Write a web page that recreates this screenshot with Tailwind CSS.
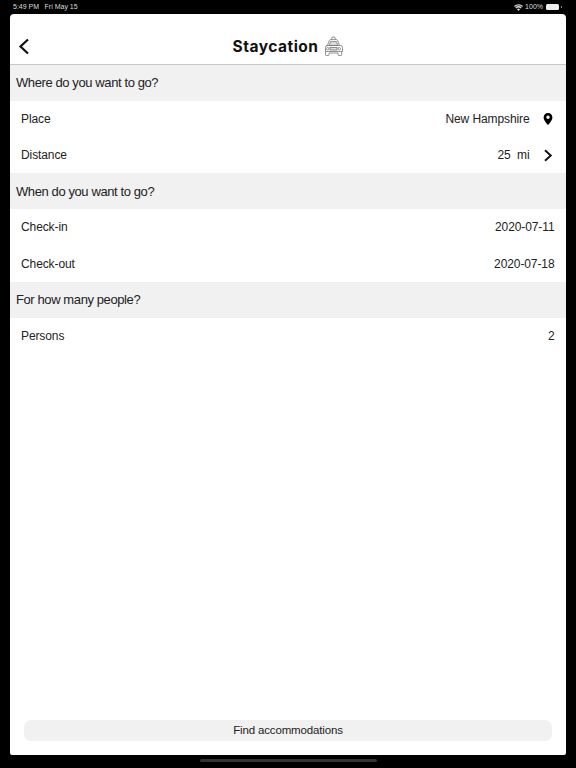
<!DOCTYPE html>
<html lang="en">
<head>
    <meta charset="UTF-8">
    <meta name="viewport" content="width=device-width, initial-scale=1.0">
    <title>Staycation</title>
    <script src="https://cdn.jsdelivr.net/npm/@tailwindcss/browser@4"></script>
</head>
<body class="bg-black font-['Liberation_Sans',sans-serif] text-[12px] tracking-[-0.1px] text-[#222]">
    <div class="relative h-[768px] w-[576px] overflow-hidden bg-black">
        <!-- status bar -->
        <div class="flex h-[13px] items-center justify-between pt-[1px] pl-[13px] pr-[14px] text-[7px] tracking-normal text-[#ddd]">
            <div class="flex gap-[5.5px]"><span>5:49 PM</span><span>Fri May 15</span></div>
            <div class="flex items-center gap-[2px]">
                <svg width="9" height="7" viewBox="0 0 18 14" fill="#ddd"><path d="M9 14 6 10.6a4.4 4.4 0 0 1 6 0zM4.4 8.9 2.7 7a9.3 9.3 0 0 1 12.6 0l-1.7 1.9a6.8 6.8 0 0 0-9.2 0zM1.6 5.8 0 4a13.3 13.3 0 0 1 18 0l-1.6 1.8a11 11 0 0 0-14.8 0z"/></svg>
                <span>100%</span>
                <div class="ml-[1px] h-[6px] w-[13px] rounded-[1.5px] bg-[#eee]"></div>
                <div class="h-[2px] w-[1px] bg-[#888]"></div>
            </div>
        </div>

        <!-- card -->
        <div class="mx-[10px] mt-[1px] flex h-[741px] w-[556px] flex-col rounded-t-[4px] rounded-b-[2px] bg-white">
            <div class="relative flex h-[51px] shrink-0 items-center justify-center border-b border-[#c8c8c8] pt-[15px]">
                <svg class="absolute left-[8px] top-[24px]" width="12" height="17" viewBox="0 0 12 17" fill="none" stroke="#111" stroke-width="2.2"><path d="M10 1.5 2.5 8.5l7.5 7"/></svg>
                <span class="font-['Inter',sans-serif] text-[15.5px] font-bold tracking-[0.5px] text-[#111]">Staycation</span>
                <svg class="ml-[4px]" width="21" height="21" viewBox="0 0 21 21" fill="none" stroke="#777" stroke-width="0.8">
                    <path d="M8.5 3.5 9.3 1h2.4l.8 2.5"/>
                    <path d="M4.5 9.5 6.3 4.6a1.4 1.4 0 0 1 1.3-1h5.8a1.4 1.4 0 0 1 1.3 1l1.8 4.9"/>
                    <path d="M6.3 9.5 7.6 5.6h5.8l1.3 3.9z" fill="#ddd"/>
                    <path d="M3.5 9.5h14a2 2 0 0 1 2 2v4h-17v-4a2 2 0 0 1 2-2z"/>
                    <rect x="7" y="11.5" width="7" height="2.5" fill="#ddd"/>
                    <circle cx="4.7" cy="12.7" r="1.2"/><circle cx="16.3" cy="12.7" r="1.2"/>
                    <path d="M2.5 15.5v3.2a.8.8 0 0 0 .8.8h2a.8.8 0 0 0 .8-.8v-1.7h9v1.7a.8.8 0 0 0 .8.8h2a.8.8 0 0 0 .8-.8v-3.2"/>
                </svg>
            </div>

            <div class="flex h-[36px] shrink-0 items-center bg-[#f1f1f1] pl-[6px] text-[13px] tracking-[-0.4px]">Where do you want to go?</div>
            <div class="flex h-[36.2px] items-center justify-between pl-[11px] pr-[11.5px]">
                <span>Place</span>
                <div class="flex items-center"><span>New Hampshire</span>
                    <svg class="mr-[2px] ml-[13px]" width="10" height="12" viewBox="0 0 10 12" fill="#000"><path fill-rule="evenodd" d="M5 0a4.4 4.4 0 0 0-4.4 4.4C.6 7.3 5 12 5 12s4.4-4.7 4.4-7.6A4.4 4.4 0 0 0 5 0zm0 6a1.7 1.7 0 1 1 0-3.4A1.7 1.7 0 0 1 5 6z"/></svg>
                </div>
            </div>
            <div class="flex h-[36.2px] items-center justify-between pl-[11px] pr-[11.5px]">
                <span>Distance</span>
                <div class="flex items-center"><span class="whitespace-pre">25  mi</span>
                    <svg class="mr-[2px] ml-[13px]" width="10" height="13" viewBox="0 0 10 13" fill="none" stroke="#111" stroke-width="1.9"><path d="M2 1.2 7.8 6.5 2 11.8"/></svg>
                </div>
            </div>
            <div class="flex h-[36px] shrink-0 items-center bg-[#f1f1f1] pl-[6px] text-[13px] tracking-[-0.4px]">When do you want to go?</div>
            <div class="flex h-[36.2px] items-center justify-between pl-[11px] pr-[11.5px]"><span>Check-in</span><span>2020-07-11</span></div>
            <div class="flex h-[36.2px] items-center justify-between pl-[11px] pr-[11.5px]"><span>Check-out</span><span>2020-07-18</span></div>
            <div class="flex h-[36px] shrink-0 items-center bg-[#f1f1f1] pl-[6px] text-[13px] tracking-[-0.4px]">For how many people?</div>
            <div class="flex h-[36.2px] items-center justify-between pl-[11px] pr-[11.5px]"><span>Persons</span><span>2</span></div>

            <div class="mx-[14px] mt-auto mb-[14px] flex h-[21px] items-center justify-center rounded-[7px] bg-[#f1f1f1] text-[11.5px] tracking-[-0.15px]">Find accommodations</div>
        </div>

        <div class="mx-auto mt-[4px] h-[3px] w-[177px] rounded-full bg-[#333]"></div>
    </div>
</body>
</html>
